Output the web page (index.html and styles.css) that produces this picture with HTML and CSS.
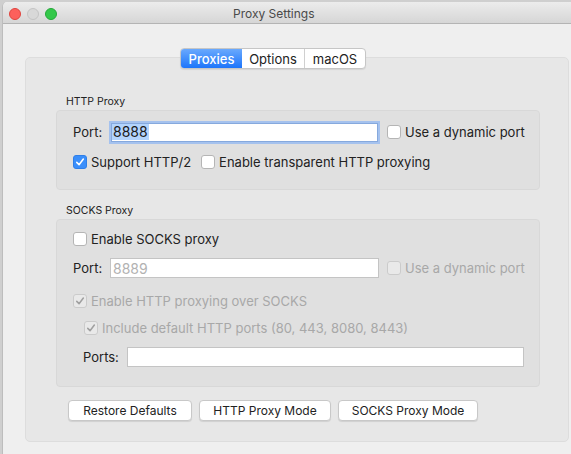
FILE: index.html
```html
<!DOCTYPE html>
<html lang="en">
<head>
    <meta charset="UTF-8">
    <title>Proxy Settings</title>
    <link rel="stylesheet" href="styles.css">
</head>
<body>
    <div class="window">
        <div class="titlebar">
            <span class="light red"></span>
            <span class="light gray"></span>
            <span class="light green"></span>
            <span class="title">Proxy Settings</span>
        </div>

        <div class="content">
            <div class="tabs">
                <span class="tab active" style="width: 62px">Proxies</span>
                <span class="tab" style="width: 63px">Options</span>
                <span class="tab" style="width: 61px">macOS</span>
            </div>

            <div class="tabview">
                <div class="group-label">HTTP Proxy</div>
                <div class="group http">
                    <div class="row">
                        <span class="label port-label">Port:</span>
                        <div class="field focused port-field"><span class="selected">8888</span></div>
                        <label class="check"><span class="box"></span>Use a dynamic port</label>
                    </div>
                    <div class="row second">
                        <label class="check"><span class="box on">
                            <svg viewBox="0 0 14 14"><path d="M3.2 7.4 L5.9 10.1 L10.9 3.6"/></svg>
                        </span>Support HTTP/2</label>
                        <label class="check gap"><span class="box"></span>Enable transparent HTTP proxying</label>
                    </div>
                </div>

                <div class="group-label socks-label">SOCKS Proxy</div>
                <div class="group socks">
                    <div class="row">
                        <label class="check"><span class="box"></span>Enable SOCKS proxy</label>
                    </div>
                    <div class="row r-port">
                        <span class="label port-label">Port:</span>
                        <div class="field port-field socks-port"><span class="placeholder">8889</span></div>
                        <label class="check disabled"><span class="box"></span>Use a dynamic port</label>
                    </div>
                    <div class="row r-over">
                        <label class="check disabled"><span class="box on">
                            <svg viewBox="0 0 14 14"><path d="M3.2 7.4 L5.9 10.1 L10.9 3.6"/></svg>
                        </span>Enable HTTP proxying over SOCKS</label>
                    </div>
                    <div class="row r-incl">
                        <label class="check disabled"><span class="box on">
                            <svg viewBox="0 0 14 14"><path d="M3.2 7.4 L5.9 10.1 L10.9 3.6"/></svg>
                        </span>Include default HTTP ports (80, 443, 8080, 8443)</label>
                    </div>
                    <div class="row r-ports">
                        <span class="label ports-label">Ports:</span>
                        <div class="field ports-field"></div>
                    </div>
                </div>

                <div class="buttons">
                    <button class="button" style="width: 124px">Restore Defaults</button>
                    <button class="button" style="width: 132px">HTTP Proxy Mode</button>
                    <button class="button" style="width: 140px">SOCKS Proxy Mode</button>
                </div>
            </div>
        </div>
    </div>
</body>
</html>
```

FILE: styles.css
```css
body {
    margin: 0;
    height: 454px;
    overflow: hidden;
    background: #cfcfcf;
    font-family: Inter, "Liberation Sans", sans-serif;
    font-size: 13px;
    color: #222;
}

.window {
    margin: 2px 0 0 2px;
    width: 590px;
    height: 460px;
    background: #efefef;
    border-left: 1px solid #bdbdbd;
    border-top-left-radius: 5px;
    overflow: hidden;
}

/* title bar */
.titlebar {
    display: flex;
    align-items: flex-start;
    height: 22px;
    box-sizing: border-box;
    padding: 6px 0 0 6px;
    background: linear-gradient(#ececec, #d6d6d6);
    border-bottom: 1px solid #b4b4b4;
}

.light {
    width: 12px;
    height: 12px;
    box-sizing: border-box;
    border-radius: 50%;
    margin-right: 6px;
}

.red { background: #fc605c; border: 1px solid #e0443e; }
.gray { background: #d8d8d8; border: 1px solid #c4c4c4; }
.green { background: #34c84a; border: 1px solid #24a93a; }

.title {
    margin: -2px 0 0 170px;
    font-size: 12px;
    color: #4a4a4a;
}

/* content */
.content {
    padding: 24px 0 0 22px;
}

.tabs {
    position: relative;
    z-index: 1;
    display: flex;
    margin-left: 155px;
    height: 21px;
    width: 186px;
    box-sizing: border-box;
    border: 1px solid #c6c6c6;
    border-radius: 4px;
    background: #fff;
    box-shadow: 0 1px 1px rgba(0, 0, 0, 0.08);
    overflow: hidden;
}

.tab {
    display: flex;
    align-items: center;
    justify-content: center;
    font-size: 13px;
    color: #222;
    border-left: 1px solid #d0d0d0;
}

.tab.active {
    border-left: none;
    background: linear-gradient(#6aa9fd, #1c75fb);
    color: #fff;
    font-weight: 500;
}

.tab.active + .tab {
    border-left: none;
}

.tabview {
    margin-top: -12px;
    width: 544px;
    height: 385px;
    box-sizing: border-box;
    padding: 37px 0 0 30px;
    background: #e7e7e7;
    border: 1px solid #dddddd;
    border-radius: 5px;
}

.group-label {
    font-size: 10.5px;
    line-height: 14px;
    color: #222;
    padding-left: 10px;
}

.socks-label {
    margin-top: 14px;
}

.group {
    margin-top: 1px;
    width: 484px;
    box-sizing: border-box;
    background: #e0e0e0;
    border: 1px solid #d8d8d8;
    border-radius: 4px;
    padding-left: 16px;
}

.http {
    height: 80px;
    padding-top: 10px;
}

.socks {
    height: 168px;
    padding-top: 8px;
}

.row {
    display: flex;
    align-items: center;
    height: 22px;
}

.second { margin-top: 8px; }
.r-port { margin-top: 7px; }
.r-over { margin-top: 11px; }
.r-incl { margin-top: 5px; padding-left: 11px; }
.r-ports { margin-top: 7px; padding-left: 10px; }

.label {
    color: #222;
}

.port-label {
    width: 37px;
}

.ports-label {
    width: 44px;
}

.field {
    height: 20px;
    box-sizing: border-box;
    background: #fff;
    border: 1px solid #c4c4c4;
    font-size: 14px;
    display: flex;
    align-items: center;
    padding-left: 2px;
}

.port-field {
    width: 269px;
    margin-right: 8px;
}

.focused {
    height: 19px;
    width: 267px;
    border-color: #86a9dd;
    box-shadow: 0 0 0 2px #a5c2ee;
    margin: 0 9px 0 1px;
    padding-left: 0;
}

.ports-field {
    width: 397px;
}

.selected {
    background: #b3d4fd;
    color: #1a1a1a;
    padding: 0 1px;
    line-height: 16px;
}

.placeholder {
    color: #b2b2b2;
}

/* checkboxes */
.check {
    display: flex;
    align-items: center;
    color: #222;
}

.check.gap {
    margin-left: 10px;
}

.box {
    width: 14px;
    height: 14px;
    box-sizing: border-box;
    background: #fff;
    border: 1px solid #b5b5b5;
    border-radius: 3px;
    margin-right: 4px;
    display: flex;
}

.box.on {
    background: #3b8ffb;
    border-color: #2f7fe8;
}

.box svg {
    width: 12px;
    height: 12px;
}

.box path {
    fill: none;
    stroke: #fff;
    stroke-width: 1.8;
    stroke-linecap: round;
    stroke-linejoin: round;
}

.disabled {
    color: #a8a8a8;
}

.disabled .box {
    background: #e9e9e9;
    border-color: #cbcbcb;
}

.disabled .box path {
    stroke: #a0a0a0;
}

/* bottom buttons */
.buttons {
    display: flex;
    gap: 7px;
    margin: 13px 0 0 12px;
}

.button {
    height: 21px;
    box-sizing: border-box;
    background: #fff;
    border: 1px solid #c8c8c8;
    border-radius: 4px;
    box-shadow: 0 1px 1px rgba(0, 0, 0, 0.1);
    font-family: Inter, "Liberation Sans", sans-serif;
    font-size: 12px;
    color: #222;
    padding: 0;
}
```
